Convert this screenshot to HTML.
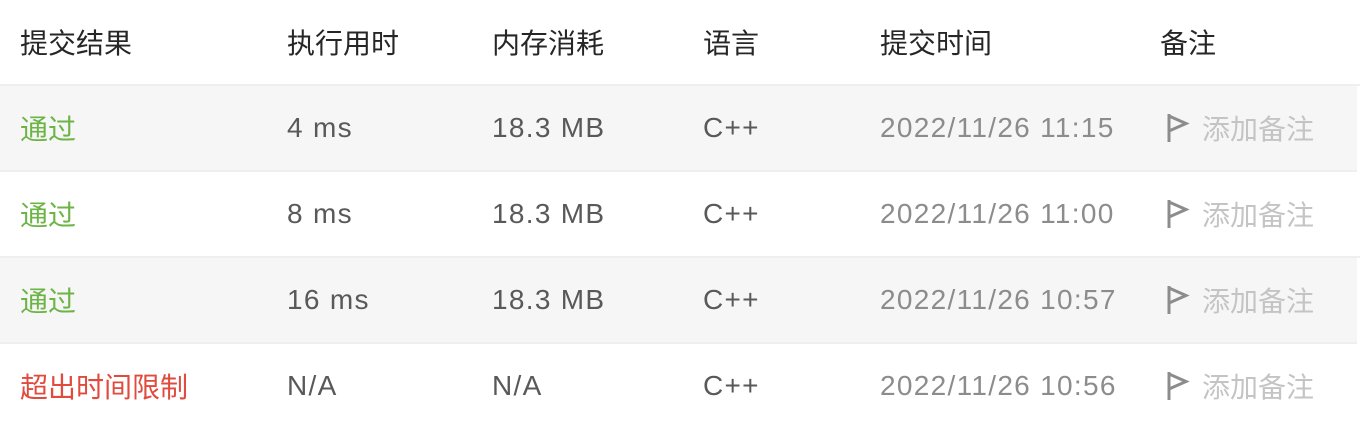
<!DOCTYPE html>
<html><head><meta charset="utf-8"><style>
html,body{margin:0;padding:0;background:#fff;width:1360px;height:426px;overflow:hidden;font-family:"Liberation Sans","Noto Sans CJK SC",sans-serif;}
.row{position:relative;height:84px;border-bottom:2px solid #efefef;font-size:28px;color:#595959;}
.row.g{background:#f6f6f6;width:1357px;}
.row span{position:absolute;top:50%;transform:translateY(-50%);white-space:nowrap;}
.n{font-size:28px;letter-spacing:1.3px}
.h{color:#262626;}
.c1{left:20px}.c2{left:287px}.c3{left:492px}.c4{left:703px}.c5{left:880px}.c6{left:1166px}
.t{color:#8c8c8c}
.ok{color:#6cb445}.bad{color:#e04b3e}
.rm{color:#c4c4c4;}
.rm svg{vertical-align:-4px;margin-right:12px}
</style></head><body>
<div class="row h" style="height:84px"><span class="c1">提交结果</span><span class="c2">执行用时</span><span class="c3">内存消耗</span><span class="c4">语言</span><span class="c5">提交时间</span><span class="c6" style="left:1160px">备注</span></div>
<div class="row g"><span class="c1 ok">通过</span><span class="c2 n">4 ms</span><span class="c3 n">18.3 MB</span><span class="c4 n">C++</span><span class="c5 t n">2022/11/26 11:15</span><span class="c6 rm"><svg width="24" height="31" viewBox="0 0 24 31"><path d="M3 2V30M3 4L20 11.5L3 19" fill="none" stroke="#8c8c8c" stroke-width="3"/></svg>添加备注</span></div>
<div class="row"><span class="c1 ok">通过</span><span class="c2 n">8 ms</span><span class="c3 n">18.3 MB</span><span class="c4 n">C++</span><span class="c5 t n">2022/11/26 11:00</span><span class="c6 rm"><svg width="24" height="31" viewBox="0 0 24 31"><path d="M3 2V30M3 4L20 11.5L3 19" fill="none" stroke="#8c8c8c" stroke-width="3"/></svg>添加备注</span></div>
<div class="row g"><span class="c1 ok">通过</span><span class="c2 n">16 ms</span><span class="c3 n">18.3 MB</span><span class="c4 n">C++</span><span class="c5 t n">2022/11/26 10:57</span><span class="c6 rm"><svg width="24" height="31" viewBox="0 0 24 31"><path d="M3 2V30M3 4L20 11.5L3 19" fill="none" stroke="#8c8c8c" stroke-width="3"/></svg>添加备注</span></div>
<div class="row" style="border-bottom:none"><span class="c1 bad">超出时间限制</span><span class="c2 n">N/A</span><span class="c3 n">N/A</span><span class="c4 n">C++</span><span class="c5 t n">2022/11/26 10:56</span><span class="c6 rm"><svg width="24" height="31" viewBox="0 0 24 31"><path d="M3 2V30M3 4L20 11.5L3 19" fill="none" stroke="#8c8c8c" stroke-width="3"/></svg>添加备注</span></div>
</body></html>
